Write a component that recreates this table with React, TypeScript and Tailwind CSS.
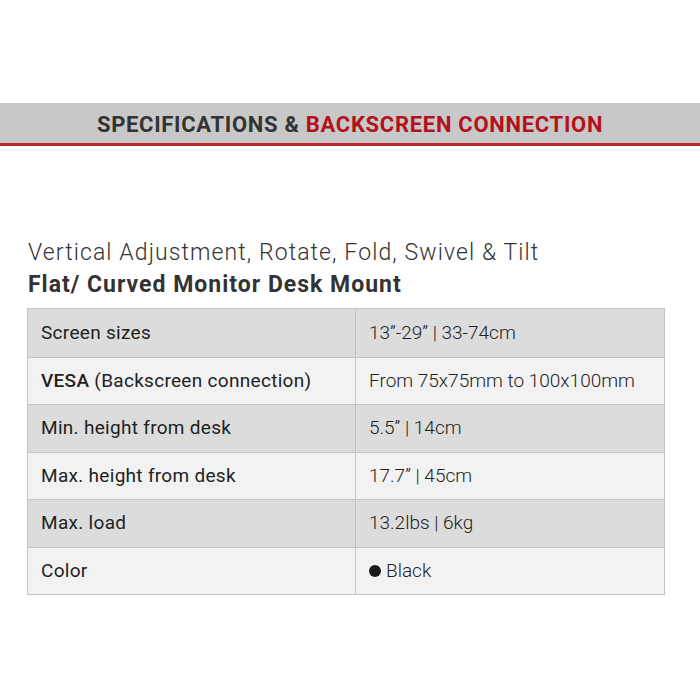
const rows: [React.ReactNode, React.ReactNode][] = [
  ["Screen sizes", "13”-29” | 33-74cm"],
  [
    <span>
      <span className="font-medium">VESA</span> (Backscreen connection)
    </span>,
    "From 75x75mm to 100x100mm",
  ],
  ["Min. height from desk", "5.5” | 14cm"],
  ["Max. height from desk", "17.7” | 45cm"],
  ["Max. load", "13.2lbs | 6kg"],
  [
    "Color",
    <span className="flex items-center gap-[5px]">
      <span className="inline-block w-[12px] h-[12px] rounded-full bg-[#1a1a1a]" />
      Black
    </span>,
  ],
];

export default function App() {
  return (
    <div className="w-[700px] h-[700px] bg-white font-['Roboto',sans-serif] text-[#2b2b2b]">
      <div className="h-[103px]" />
      {/* header band */}
      <div className="h-[40px] bg-[#c8c8c8] flex items-center justify-center pt-[4px]">
        <h2 className="text-[22px] font-bold tracking-[0.7px] leading-none">
          <span className="text-[#333333]">SPECIFICATIONS &amp; </span>
          <span className="text-[#b3121c]">BACKSCREEN CONNECTION</span>
        </h2>
      </div>
      <div className="h-[3px] bg-[#c0272d]" />

      <div className="pl-[28px] pt-[91px]">
        <p className="text-[23px] font-light tracking-[1.1px] leading-[32px] text-[#333333]">
          Vertical Adjustment, Rotate, Fold, Swivel &amp; Tilt
        </p>
        <p className="text-[23px] font-bold tracking-[1px] leading-[32px] text-[#333333]">
          Flat/ Curved Monitor Desk Mount
        </p>
      </div>

      <div className="mt-[7px] ml-[27px] w-[638px] border border-[#c4c4c4]">
        {rows.map(([k, v], i) => (
          <div
            key={i}
            className={`flex h-[47.5px] ${i > 0 ? "border-t border-[#c4c4c4]" : ""} ${
              i % 2 === 0 ? "bg-[#dcdcdc]" : "bg-[#f2f2f2]"
            }`}
          >
            <div className="w-[328px] border-r border-[#c4c4c4] flex items-center pl-[13px] text-[19px] tracking-[0.3px] text-[#222222]">
              {k}
            </div>
            <div className="flex-1 flex items-center pl-[13px] text-[19px] font-light text-[#222222]">
              {v}
            </div>
          </div>
        ))}
      </div>
    </div>
  );
}
